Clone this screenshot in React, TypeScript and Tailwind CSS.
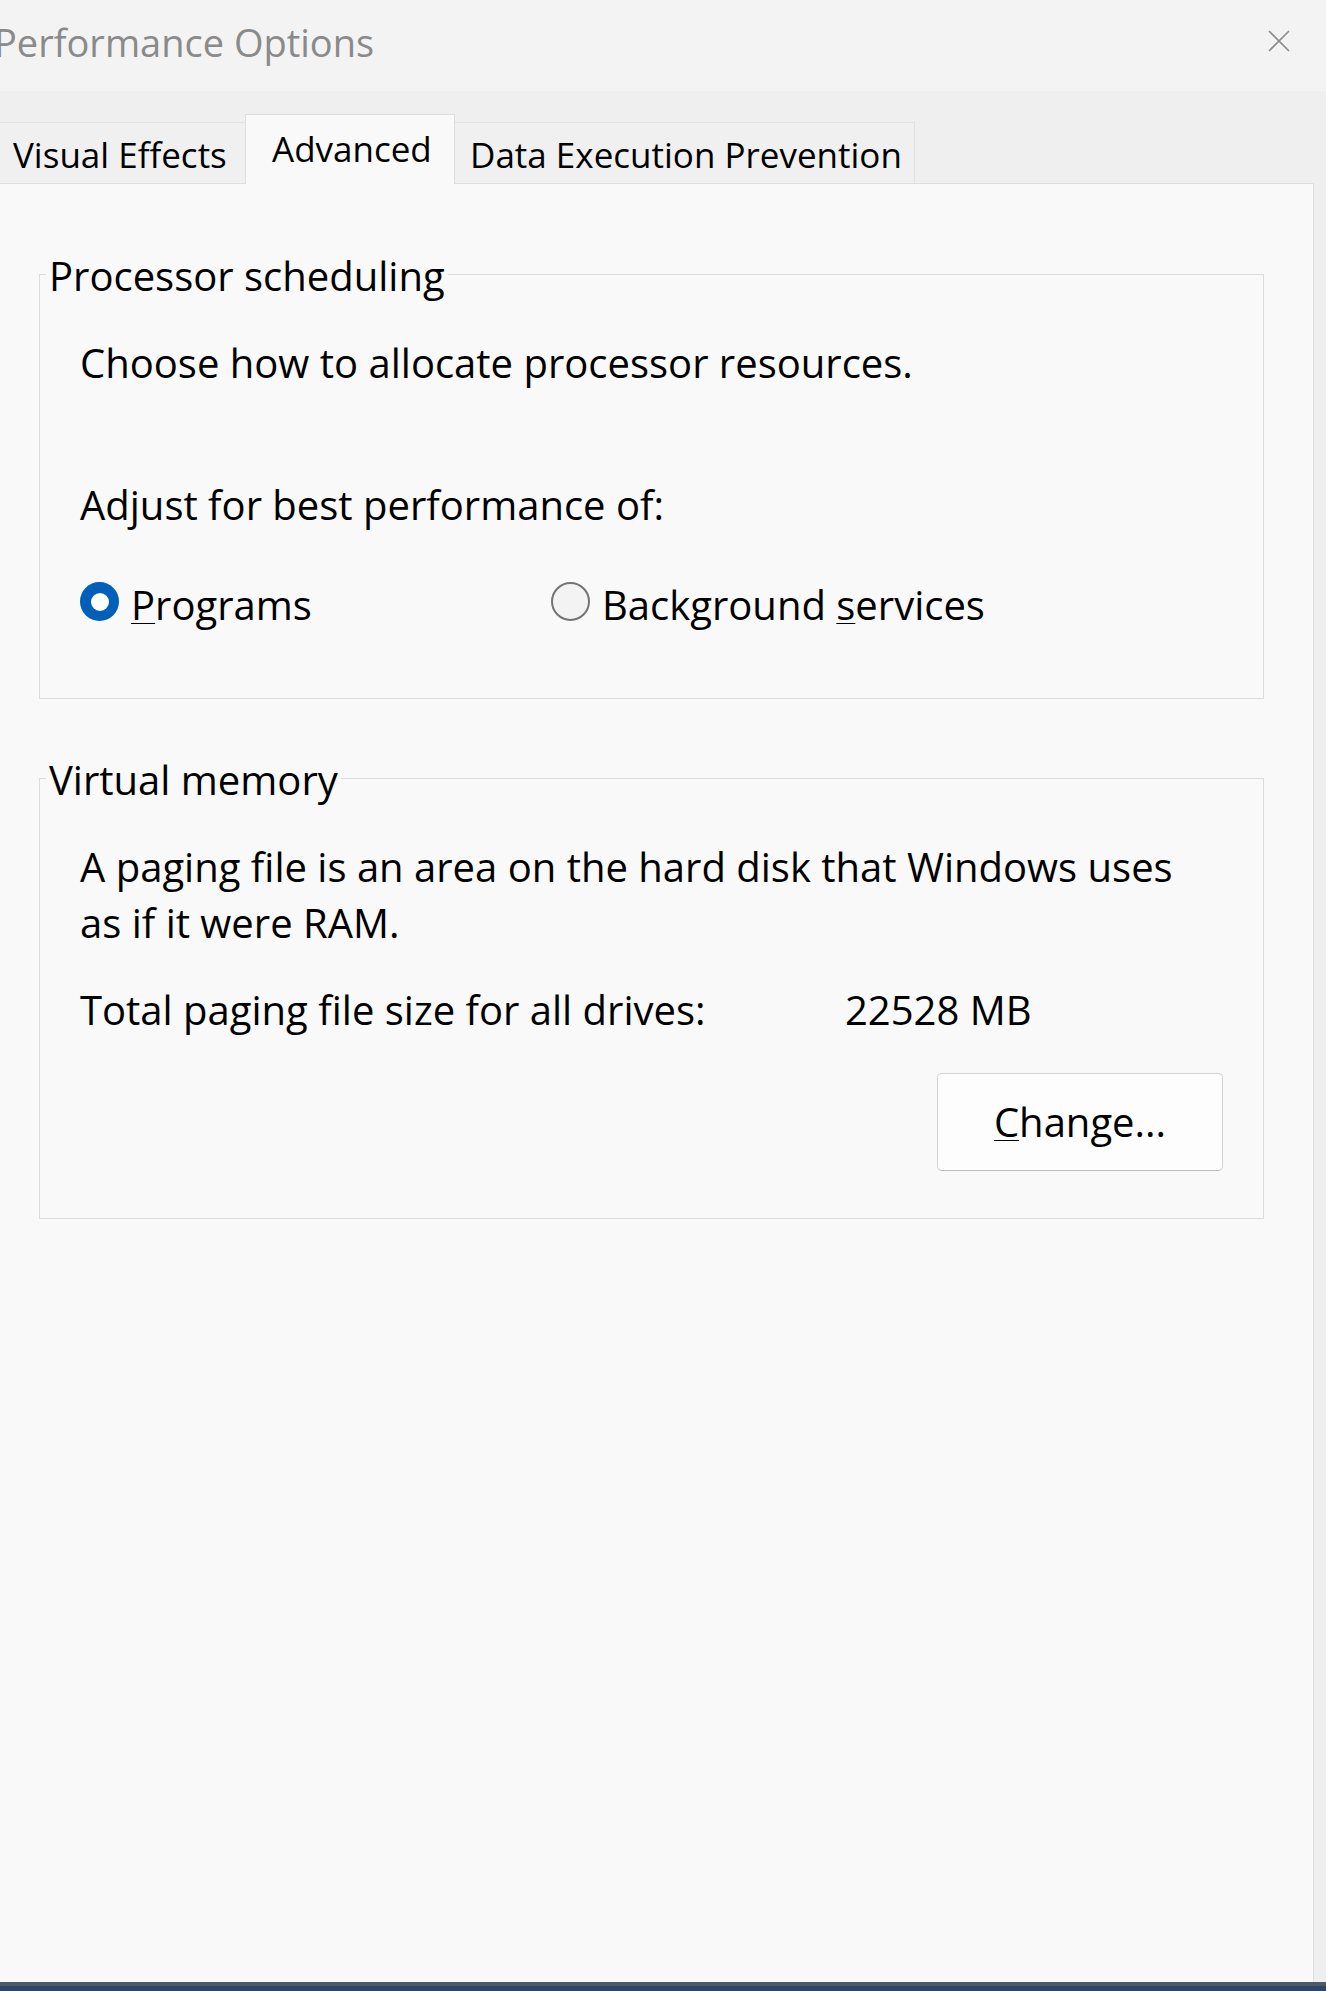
import React from "react";

const FONT = { fontFamily: '"Open Sans", "Noto Sans", sans-serif' };

function Radio({ checked }: { checked: boolean }) {
  if (checked) {
    return (
      <div className="w-[39px] h-[39px] mt-[5px] rounded-full bg-[#005fb8] flex items-center justify-center shrink-0">
        <div className="w-[18px] h-[18px] rounded-full bg-white" />
      </div>
    );
  }
  return (
    <div className="w-[39px] h-[39px] mt-[5px] rounded-full border-2 border-[#737373] bg-[#f3f3f3] shrink-0" />
  );
}

export default function App() {
  return (
    <div
      className="w-[1326px] h-[1991px] flex flex-col bg-[#efefef] overflow-hidden text-black"
      style={FONT}
    >
      {/* Title bar */}
      <div className="h-[91px] bg-[#f3f3f3] flex items-start justify-between shrink-0">
        <div className="ml-[-6px] pt-[18px] text-[38px] leading-[48px] text-[#8a8a8a] whitespace-nowrap">
          Performance Options
        </div>
        <svg className="mt-[30px] mr-[36px]" width="22" height="22" viewBox="0 0 22 22">
          <path d="M1 1 L21 21 M21 1 L1 21" stroke="#8c8c8c" strokeWidth="1.6" fill="none" />
        </svg>
      </div>

      {/* Tabs */}
      <div className="h-[92px] flex items-end shrink-0">
        <div className="ml-[-1px] w-[246px] h-[61px] border border-b-0 border-r-0 border-[#e2e2e2] bg-[#f0f0f0] pl-[13px] text-[35px] leading-[63px] whitespace-nowrap">
          Visual Effects
        </div>
        <div className="relative z-10 w-[210px] h-[70px] mb-[-1px] border border-b-0 border-[#dedede] bg-[#f9f9f9] pl-[26px] text-[35px] leading-[67px] whitespace-nowrap">
          Advanced
        </div>
        <div className="w-[460px] h-[61px] border border-b-0 border-l-0 border-[#e2e2e2] bg-[#f0f0f0] pl-[15px] text-[35px] leading-[63px] whitespace-nowrap">
          Data Execution Prevention
        </div>
      </div>

      {/* Panel */}
      <div className="flex-1 mr-[12px] bg-[#f9f9f9] border-t border-r border-[#dedede] text-[40px]">
        {/* Processor scheduling */}
        <fieldset className="ml-[39px] mt-[65px] w-[1225px] h-[450px] border border-[#dcdcdc] p-0 m-0">
          <legend className="ml-[6px] px-[3px] pt-[3px] leading-[48px] whitespace-nowrap">
            Processor scheduling
          </legend>
          <div className="pl-[40px]">
            <div className="mt-[35px] leading-[56px] whitespace-nowrap">
              Choose how to allocate processor resources.
            </div>
            <div className="mt-[86px] leading-[56px] whitespace-nowrap">
              Adjust for best performance of:
            </div>
            <div className="mt-[44px] h-[56px] flex items-start">
              <div className="w-[471px] flex items-start">
                <Radio checked />
                <span className="ml-[12px] leading-[56px] whitespace-nowrap">
                  <span className="underline decoration-1 underline-offset-[3px]">P</span>rograms
                </span>
              </div>
              <div className="flex items-start">
                <Radio checked={false} />
                <span className="ml-[12px] leading-[56px] whitespace-nowrap">
                  Background <span className="underline decoration-1 underline-offset-[3px]">s</span>ervices
                </span>
              </div>
            </div>
          </div>
        </fieldset>

        {/* Virtual memory */}
        <fieldset className="ml-[39px] mt-[54px] w-[1225px] h-[466px] border border-[#dcdcdc] p-0 m-0">
          <legend className="ml-[6px] px-[3px] pt-[3px] leading-[48px] whitespace-nowrap">
            Virtual memory
          </legend>
          <div className="pl-[40px]">
            <div className="mt-[35px] leading-[56px] whitespace-nowrap">
              A paging file is an area on the hard disk that Windows uses
              <br />
              as if it were RAM.
            </div>
            <div className="mt-[31px] leading-[56px] flex whitespace-nowrap">
              <span className="w-[765px]">Total paging file size for all drives:</span>
              <span>22528 MB</span>
            </div>
            <div className="mt-[35px] flex justify-end pr-[40px]">
              <button className="w-[286px] h-[98px] rounded-[5px] border border-[#d3d3d3] border-b-[#bdbdbd] bg-[#fdfdfd] text-[40px] leading-[56px] text-black">
                <span className="underline decoration-1 underline-offset-[3px]">C</span>hange...
              </button>
            </div>
          </div>
        </fieldset>
      </div>

      {/* Taskbar edge */}
      <div className="h-[9px] shrink-0 flex flex-col">
        <div className="h-[4px] bg-[#4d5868]" />
        <div className="flex-1 bg-[#2e4668]" />
      </div>
    </div>
  );
}
